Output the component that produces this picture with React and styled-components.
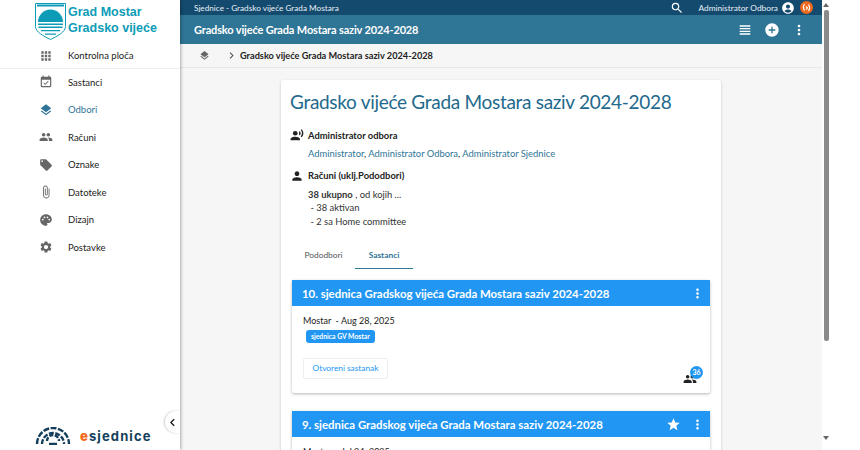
import React from 'react';
import styled, { createGlobalStyle } from 'styled-components';
import {
  MdApps,
  MdEventAvailable,
  MdLayers,
  MdPeople,
  MdLocalOffer,
  MdAttachFile,
  MdPalette,
  MdSettings,
  MdSearch,
  MdAccountCircle,
  MdViewHeadline,
  MdAddCircle,
  MdMoreVert,
  MdChevronRight,
  MdChevronLeft,
  MdPerson,
  MdRecordVoiceOver,
  MdStar,
} from 'react-icons/md';

const GlobalStyle = createGlobalStyle`
  html, body {
    margin: 0;
    height: 100%;
    overflow: hidden;
    background: #fff;
    font-family: "Lato", "Noto Sans", sans-serif;
  }
`;

const Shell = styled.div`
  width: 860px;
  height: 450px;
  display: grid;
  grid-template-columns: 180px 642px 38px;
  overflow: hidden;
`;

const Sidebar = styled.aside`
  position: relative;
  display: flex;
  flex-direction: column;
  background: #fff;
  box-shadow: 1px 0 3px rgba(0, 0, 0, 0.3);
  z-index: 2;
`;

const Brand = styled.div`
  height: 43px;
  flex: none;
  box-sizing: border-box;
  padding: 3px 0 0 35px;
  display: flex;
  gap: 2px;
`;

const BrandText = styled.div`
  font-family: "Liberation Sans", sans-serif;
  font-weight: 700;
  font-size: 12.5px;
  line-height: 15.5px;
  color: #0d9cb8;
  padding-top: 2px;
  white-space: nowrap;
`;

const Nav = styled.nav`
  display: flex;
  flex-direction: column;
`;

const NavItem = styled.div`
  height: 27.5px;
  box-sizing: border-box;
  flex: none;
  display: flex;
  align-items: center;
  padding-left: 39px;
  gap: 15px;
  font-size: 9.5px;
  color: ${(p) => (p.$active ? '#2f7596' : '#222')};
  svg {
    font-size: 14px;
    color: ${(p) => (p.$active ? '#2f7596' : '#666')};
  }
  ${(p) => p.$first && 'height: 26px; border-bottom: 1px solid #eee; margin-bottom: -0.5px;'}
`;

const FootLogo = styled.div`
  margin-top: auto;
  height: 24px;
  padding: 0 0 2px 35px;
  display: flex;
  align-items: center;
  gap: 9px;
`;

const FootText = styled.span`
  font-family: "Inter", sans-serif;
  font-weight: 700;
  font-size: 13px;
  letter-spacing: 1.1px;
  color: #163f5c;
  b {
    color: #f26a1b;
  }
`;

const CollapseButton = styled.button`
  position: absolute;
  right: 0;
  top: 411px;
  width: 15px;
  height: 22px;
  padding: 0;
  border: 0;
  border-radius: 12px 0 0 12px;
  background: #fff;
  box-shadow: -1px 0 2px rgba(0, 0, 0, 0.2);
  display: flex;
  align-items: center;
  justify-content: center;
  font-size: 17px;
  color: #111;
`;

const Main = styled.main`
  display: flex;
  flex-direction: column;
  min-width: 0;
  background: #f6f6f6;
  overflow: hidden;
`;

const TopBar = styled.div`
  height: 15px;
  flex: none;
  display: flex;
  align-items: center;
  padding: 0 9px 0 14px;
  background: #134a6e;
  color: #e8f0f5;
  font-size: 8.2px;
`;

const TopUser = styled.div`
  margin-left: auto;
  display: flex;
  align-items: center;
  font-size: 8.3px;
  svg {
    color: #fff;
  }
`;

const SearchIcon = styled(MdSearch)`
  font-size: 14px;
  margin-right: 15px;
`;

const UserIcon = styled(MdAccountCircle)`
  font-size: 14px;
  margin: 0 5px 0 3px;
`;

const TitleBar = styled.div`
  height: 29px;
  flex: none;
  display: flex;
  align-items: center;
  padding: 0 15px 0 14px;
  background: #2f7596;
  color: #fff;
  font-size: 11px;
  letter-spacing: -0.15px;
  font-weight: 700;
`;

const TitleActions = styled.div`
  margin-left: auto;
  display: flex;
  align-items: center;
  gap: 11px;
  font-size: 16px;
`;

const Breadcrumb = styled.div`
  height: 24px;
  flex: none;
  box-sizing: border-box;
  display: flex;
  align-items: center;
  padding-left: 19px;
  border-bottom: 1px solid #e8e8e8;
  font-size: 9.2px;
  font-weight: 700;
  color: #222;
`;

const CrumbHome = styled(MdLayers)`
  font-size: 11px;
  color: #666;
  margin-right: 15px;
`;

const CrumbSep = styled(MdChevronRight)`
  font-size: 13px;
  color: #555;
  margin-right: 2px;
`;

const Content = styled.div`
  flex: 1;
  min-height: 0;
  overflow: hidden;
  padding-top: 12px;
`;

const Panel = styled.section`
  width: 440px;
  margin: 0 auto;
  box-sizing: border-box;
  padding: 8px 11px 0;
  background: #fff;
  border-radius: 3px;
  box-shadow: 0 1px 3px rgba(0, 0, 0, 0.2);
`;

const PanelTitle = styled.h1`
  margin: 0 0 0 -2px;
  font-size: 19px;
  letter-spacing: -0.3px;
  line-height: 27px;
  font-weight: 400;
  color: #23698c;
  white-space: nowrap;
`;

const InfoHead = styled.div`
  margin: ${(p) => p.$top}px 0 0 -2px;
  height: 14px;
  display: flex;
  align-items: center;
  gap: 4px;
  font-size: 9.4px;
  font-weight: 700;
  color: #222;
  svg {
    font-size: 14px;
    color: #222;
  }
`;

const InfoBody = styled.div`
  margin: 5px 0 0 16px;
  font-size: 9.4px;
  line-height: 13.5px;
  color: #333;
  a {
    color: #2f7596;
  }
`;

const Tabs = styled.div`
  display: flex;
  margin-top: 15px;
  height: 26px;
`;

const Tab = styled.div`
  width: ${(p) => p.$width}px;
  text-align: center;
  font-size: 8.4px;
  line-height: 24px;
  color: ${(p) => (p.$active ? '#2f7596' : '#555')};
  font-weight: ${(p) => (p.$active ? 700 : 400)};
  border-bottom: ${(p) => (p.$active ? '1px solid #2f7596' : '0')};
`;

const Meeting = styled.article`
  margin-top: ${(p) => p.$top}px;
  background: #fff;
  border-radius: 2px;
  box-shadow: 0 1px 3px rgba(0, 0, 0, 0.3);
  position: relative;
`;

const MeetingHead = styled.header`
  height: 26px;
  display: flex;
  align-items: center;
  padding: 0 5px 0 10px;
  background: #2196f3;
  color: #fff;
  font-size: 11.4px;
  font-weight: 700;
  svg {
    font-size: 15px;
  }
`;

const HeadStar = styled(MdStar)`
  margin-left: auto;
`;

const HeadMenu = styled(MdMoreVert)`
  margin-left: ${(p) => (p.$push ? 'auto' : '9px')};
`;

const MeetingBody = styled.div`
  padding: 9px 11px 14px;
  height: ${(p) => p.$height}px;
  box-sizing: border-box;
`;

const MeetingPlace = styled.div`
  font-size: 9px;
  line-height: 12px;
  color: #222;
`;

const Chip = styled.span`
  display: block;
  width: fit-content;
  margin: 3px 0 0 3px;
  height: 13px;
  padding: 0 5px;
  border-radius: 3px;
  background: #2196f3;
  color: #fff;
  font-size: 6.8px;
  font-weight: 700;
  line-height: 13px;
`;

const OpenButton = styled.div`
  width: 85px;
  height: 21px;
  margin-top: 15px;
  box-sizing: border-box;
  border: 1px solid #eee;
  border-radius: 2px;
  text-align: center;
  font-size: 8.3px;
  line-height: 19px;
  color: #2196f3;
`;

const Attendees = styled.div`
  position: absolute;
  right: 7px;
  bottom: 7px;
  width: 20px;
  height: 20px;
  svg {
    position: absolute;
    left: 0;
    bottom: 0;
    font-size: 14px;
    color: #222;
  }
`;

const Badge = styled.span`
  position: absolute;
  right: 0;
  top: 0;
  width: 13px;
  height: 13px;
  border-radius: 50%;
  background: #2196f3;
  color: #fff;
  font-size: 7px;
  font-weight: 700;
  line-height: 13px;
  text-align: center;
`;

const Rail = styled.div`
  display: flex;
  flex-direction: column;
  align-items: flex-start;
  background: #fff;
  padding: 3px 0 0 1px;
  box-sizing: border-box;
`;

const Arrow = styled.span`
  width: 0;
  height: 0;
  border-left: 3px solid transparent;
  border-right: 3px solid transparent;
  ${(p) => (p.$down ? 'border-top: 4px solid #666;' : 'border-bottom: 4px solid #666;')}
`;

const Thumb = styled.div`
  width: 5px;
  height: 331px;
  margin: 3px 0 95px 0.5px;
  background: #8a8a8a;
  border-radius: 2px;
`;

const navItems = [
  { label: 'Kontrolna ploča', icon: MdApps, first: true },
  { label: 'Sastanci', icon: MdEventAvailable },
  { label: 'Odbori', icon: MdLayers, active: true },
  { label: 'Računi', icon: MdPeople },
  { label: 'Oznake', icon: MdLocalOffer },
  { label: 'Datoteke', icon: MdAttachFile },
  { label: 'Dizajn', icon: MdPalette },
  { label: 'Postavke', icon: MdSettings },
];

function ShieldLogo() {
  return (
    <svg width="31" height="37" viewBox="0 0 31 37">
      <path d="M.5.5h30v23c0 5.500-8 9.500-15 13C8.500 33 .5 29 .5 23.500z" fill="#fff" stroke="#0d9cb8" />
      <path d="M2 2.500h27" stroke="#0d9cb8" strokeWidth="2" />
      <path d="M3 19a12.500 12.500 0 0 1 25 0z" fill="#0d9cb8" />
      <path d="M3 20.500h25v1.500H3zM3.500 23.500h24V25h-24zM6 27h19v1.300H6zM10 30.500h11v1.300H10z" fill="#0d9cb8" />
    </svg>
  );
}

function ArcsLogo() {
  return (
    <svg width="36" height="18" viewBox="0 0 36 18" fill="none" stroke="#163f5c" strokeWidth="2.400">
      <path d="M2 17a16 16 0 0 1 32 0" strokeDasharray="6 1.500" />
      <path d="M7 17a11 11 0 0 1 22 0" strokeDasharray="5 1.500" />
      <path d="M12 14a6 6 0 0 1 12 0" strokeDasharray="4 1.500" />
      <path d="M14 17h8" strokeWidth="2.500" />
    </svg>
  );
}

function OrgAvatar() {
  return (
    <svg width="13" height="13" viewBox="0 0 13 13" fill="none">
      <circle cx="6.500" cy="6.500" r="6.500" fill="#ee6a1f" />
      <path d="M4.500 3C3 5 3 7 4.500 9.500M8.500 3.500C10 6 10 8 8.500 10M6 5.500l1.500 1.500-1.500 1.500" stroke="#fff" strokeWidth="1.200" />
    </svg>
  );
}

export default function App() {
  return (
    <>
      <GlobalStyle />
      <Shell>
        <Sidebar>
          <Brand>
            <ShieldLogo />
            <BrandText>
              Grad Mostar
              <br />
              Gradsko vijeće
            </BrandText>
          </Brand>
          <Nav>
            {navItems.map(({ label, icon: Icon, active, first }) => (
              <NavItem key={label} $active={active} $first={first}>
                <Icon />
                {label}
              </NavItem>
            ))}
          </Nav>
          <FootLogo>
            <ArcsLogo />
            <FootText>
              <b>e</b>sjednice
            </FootText>
          </FootLogo>
          <CollapseButton>
            <MdChevronLeft />
          </CollapseButton>
        </Sidebar>

        <Main>
          <TopBar>
            Sjednice - Gradsko vijeće Grada Mostara
            <TopUser>
              <SearchIcon />
              Administrator Odbora
              <UserIcon />
              <OrgAvatar />
            </TopUser>
          </TopBar>
          <TitleBar>
            Gradsko vijeće Grada Mostara saziv 2024-2028
            <TitleActions>
              <MdViewHeadline />
              <MdAddCircle />
              <MdMoreVert />
            </TitleActions>
          </TitleBar>
          <Breadcrumb>
            <CrumbHome />
            <CrumbSep />
            Gradsko vijeće Grada Mostara saziv 2024-2028
          </Breadcrumb>
          <Content>
            <Panel>
              <PanelTitle>Gradsko vijeće Grada Mostara saziv 2024-2028</PanelTitle>
              <InfoHead $top={13}>
                <MdRecordVoiceOver />
                Administrator odbora
              </InfoHead>
              <InfoBody>
                <a>Administrator</a>, <a>Administrator Odbora</a>, <a>Administrator Sjednice</a>
              </InfoBody>
              <InfoHead $top={8}>
                <MdPerson />
                Računi (uklj.Pododbori)
              </InfoHead>
              <InfoBody>
                <strong>38 ukupno</strong> , od kojih ...
                <br />
                &nbsp;- 38 aktivan
                <br />
                &nbsp;- 2 sa Home committee
              </InfoBody>
              <Tabs>
                <Tab $width={63}>Pododbori</Tab>
                <Tab $width={58} $active>
                  Sastanci
                </Tab>
              </Tabs>
              <Meeting $top={11}>
                <MeetingHead>
                  10. sjednica Gradskog vijeća Grada Mostara saziv 2024-2028
                  <HeadMenu $push />
                </MeetingHead>
                <MeetingBody $height={87}>
                  <MeetingPlace>Mostar &nbsp;- Aug 28, 2025</MeetingPlace>
                  <Chip>sjednica GV Mostar</Chip>
                  <OpenButton>Otvoreni sastanak</OpenButton>
                </MeetingBody>
                <Attendees>
                  <MdPeople />
                  <Badge>36</Badge>
                </Attendees>
              </Meeting>
              <Meeting $top={18}>
                <MeetingHead>
                  9. sjednica Gradskog vijeća Grada Mostara saziv 2024-2028
                  <HeadStar />
                  <HeadMenu />
                </MeetingHead>
                <MeetingBody $height={87}>
                  <MeetingPlace>Mostar &nbsp;- Jul 24, 2025</MeetingPlace>
                </MeetingBody>
              </Meeting>
            </Panel>
          </Content>
        </Main>

        <Rail>
          <Arrow />
          <Thumb />
          <Arrow $down />
        </Rail>
      </Shell>
    </>
  );
}
